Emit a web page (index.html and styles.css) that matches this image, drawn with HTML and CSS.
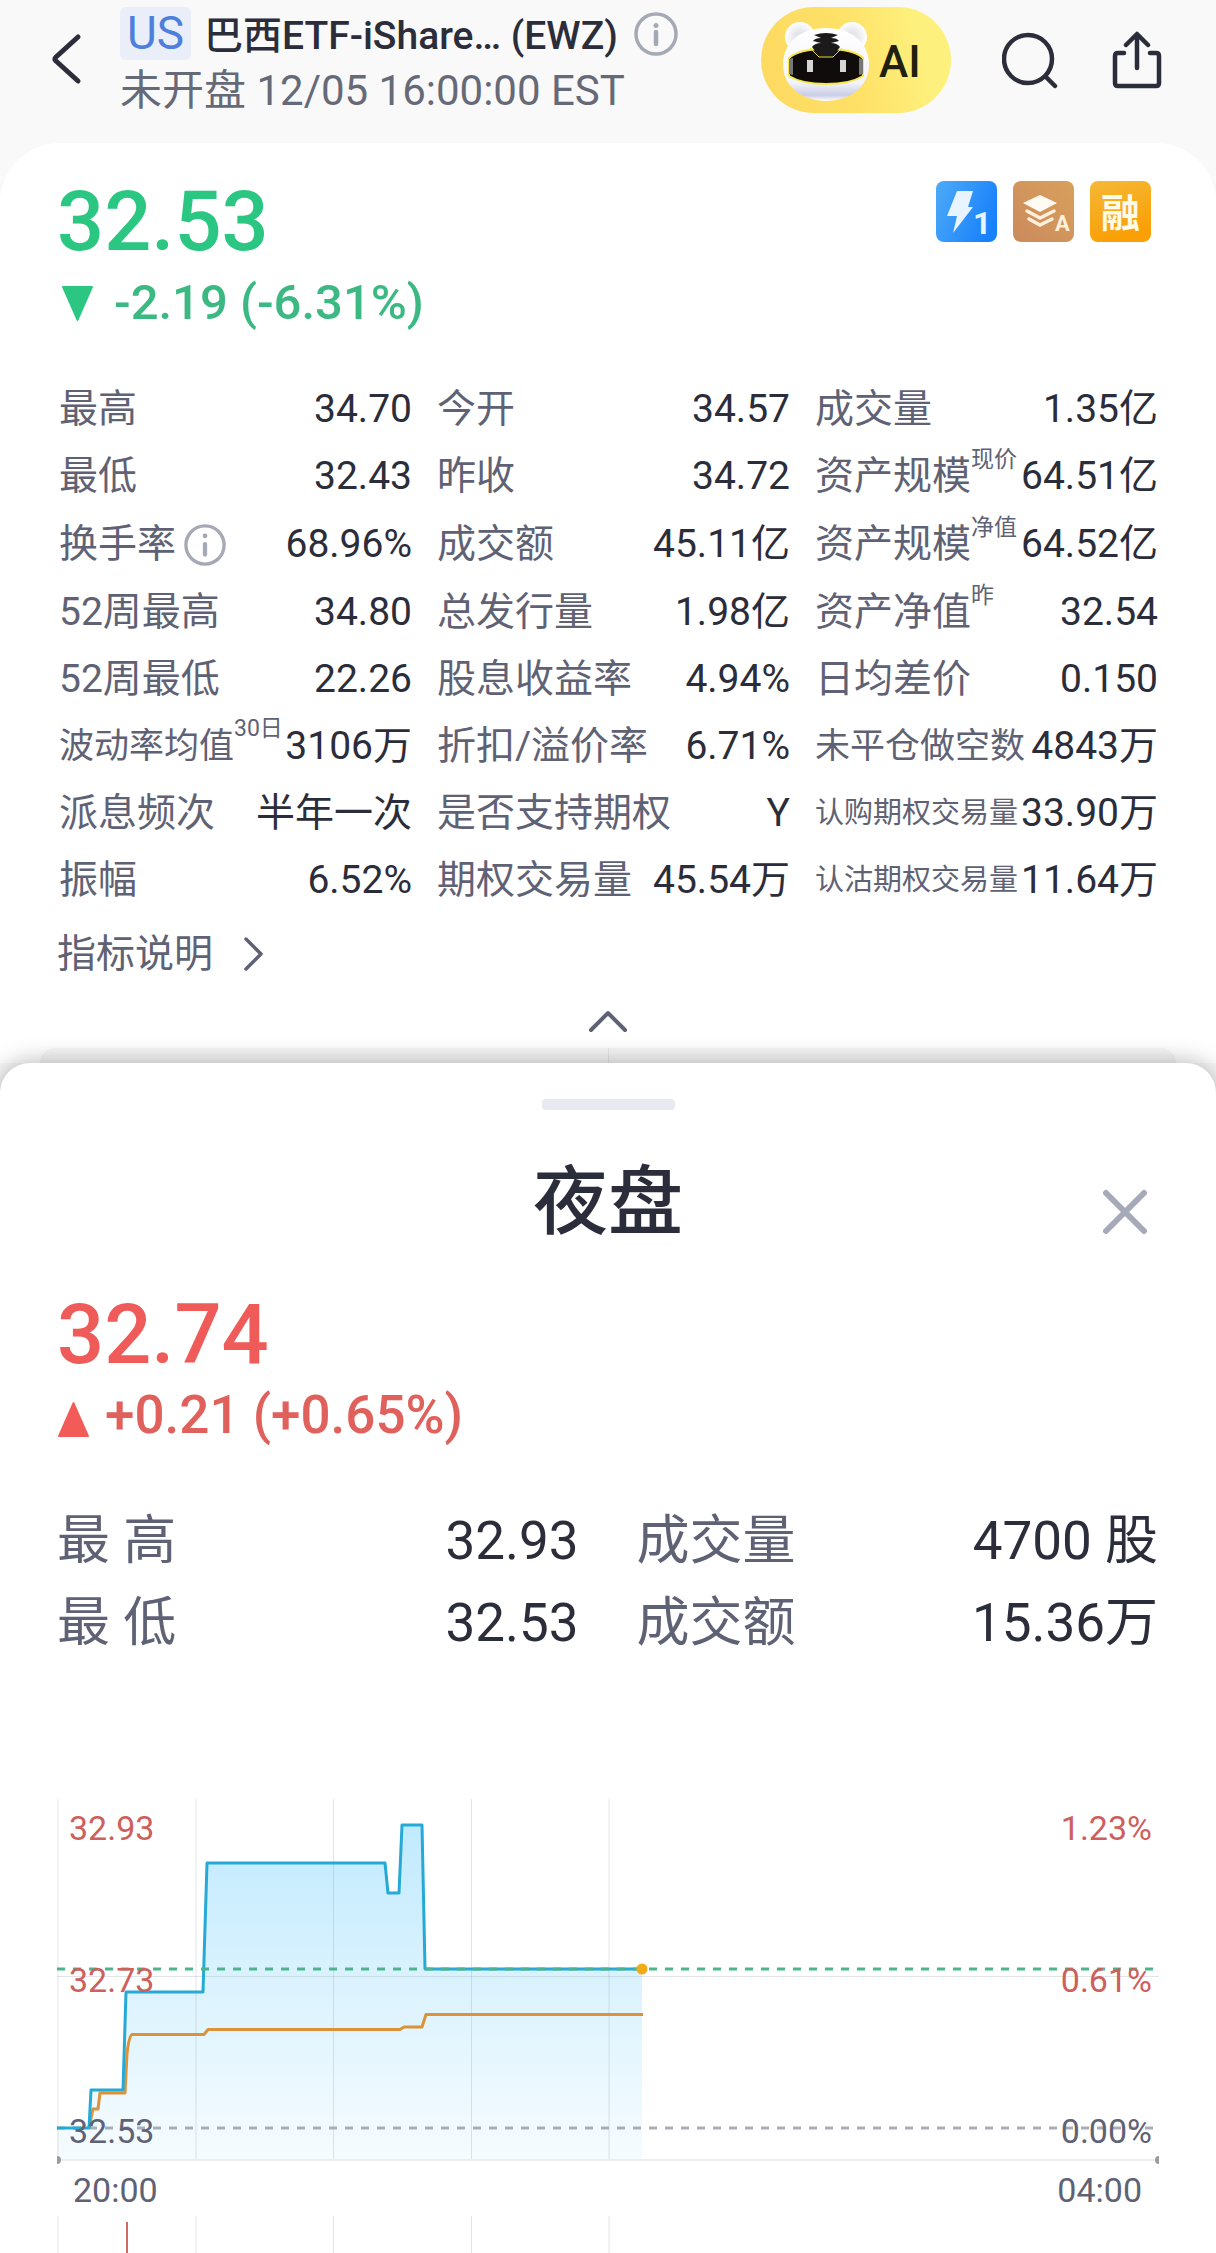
FILE: index.html
```html
<!DOCTYPE html>
<html lang="zh-CN">
<head>
<meta charset="utf-8">
<meta name="viewport" content="width=device-width, initial-scale=1">
<title>巴西ETF-iShare… (EWZ)</title>
<link rel="stylesheet" href="styles.css">
</head>
<body>
<header class="topbar">
  <button class="icon-btn back" type="button" aria-label="返回">
    <svg width="32" height="52" viewBox="0 0 32 52"><path d="M28 4 6 24q-2 2 0 4L28 48" fill="none" stroke="#2b2d3a" stroke-width="5" stroke-linecap="round" stroke-linejoin="round"/></svg>
  </button>
  <div class="heading">
    <div class="name-row">
      <span class="market">US</span>
      <h1 class="name">巴西ETF-iShare… (EWZ)</h1>
      <button class="icon-btn" type="button" aria-label="标的信息">
        <svg width="44" height="44" viewBox="0 0 44 44"><circle cx="22" cy="22" r="20" fill="none" stroke="#a5a9b5" stroke-width="3.5"/><circle cx="22" cy="13.500" r="2.500" fill="#a5a9b5"/><path d="M22 20v12" stroke="#a5a9b5" stroke-width="4.500" stroke-linecap="round"/></svg>
      </button>
    </div>
    <p class="status">未开盘 12/05 16:00:00 EST</p>
  </div>
  <button class="ai" type="button">
    <svg width="90" height="80" viewBox="0 0 90 80" aria-hidden="true">
      <defs>
        <linearGradient id="head" x1="0" y1="0" x2="0" y2="1"><stop offset="0" stop-color="#fff"/><stop offset=".75" stop-color="#f3f4fb"/><stop offset=".92" stop-color="#c9cde6"/><stop offset="1" stop-color="#fff"/></linearGradient>
        <radialGradient id="ear"><stop offset=".3" stop-color="#e4e4ea"/><stop offset="1" stop-color="#fff"/></radialGradient>
      </defs>
      <circle cx="19" cy="15" r="15" fill="url(#ear)"/><circle cx="71" cy="15" r="15" fill="url(#ear)"/>
      <path d="M45 6C20 6 2 20 2 43c0 22 20 36 43 36s43-14 43-36C88 20 70 6 45 6Z" fill="url(#head)"/>
      <path d="M45 27c-18 0-30 2-37 9v18c8 5 22 8 37 8s29-3 37-8V36c-7-7-19-9-37-9Z" fill="#100c0c" stroke="#f4e84c" stroke-width="2"/>
      <path d="m8 37 4-1v17l-4-1Zm74 0-4-1v17l4-1Z" fill="#777" />
      <path d="M33 13q12-4 24 0l-7 3q6 0 8 3l-8 2q6 0 9 4l-7 9H38l-7-9q3-4 9-4l-8-2q2-3 8-3Z" fill="#1c1a1a"/>
      <path d="m29 26 9 9h14l9-9" fill="none" stroke="#e9dc45" stroke-width="1"/>
      <path d="M26 38h6v12h-6zM59 38h6v12h-6z" fill="#d5d5d5"/>
    </svg>
    <span>AI</span>
  </button>
  <button class="icon-btn search" type="button" aria-label="搜索">
    <svg width="56" height="58" viewBox="0 0 56 58"><circle cx="26" cy="27" r="24" fill="none" stroke="#2b2d3a" stroke-width="4.500"/><path d="m44 45 9 9" stroke="#2b2d3a" stroke-width="4.500" stroke-linecap="round"/></svg>
  </button>
  <button class="icon-btn share" type="button" aria-label="分享">
    <svg width="50" height="58" viewBox="0 0 50 58"><path d="M12 22H6q-3 0-3 3v27q0 3 3 3h38q3 0 3-3V25q0-3-3-3h-6M25 37V4M14 14 25 3l11 11" fill="none" stroke="#2b2d3a" stroke-width="4.500" stroke-linecap="round" stroke-linejoin="round"/></svg>
  </button>
</header>

<main>
  <section class="quote">
    <div class="quote-top">
      <div>
        <p class="price down">32.53</p>
        <p class="change down-soft">
          <svg width="31" height="35" viewBox="0 0 31 35" aria-hidden="true"><path d="M1 0h29q1 0 1 1L16.500 34q-1 2-2 0L0 1q0-1 1-1Z" fill="#2bc681"/></svg>
          <span>-2.19 (-6.31%)</span>
        </p>
      </div>
      <div class="badges">
        <svg class="badge" viewBox="0 0 61 61" role="img" aria-label="闪电行情 1">
          <defs><linearGradient id="b1" x1="0" y1=".2" x2="1" y2=".6"><stop offset="0" stop-color="#4aa8f8"/><stop offset="1" stop-color="#1780fb"/></linearGradient></defs>
          <rect width="61" height="61" rx="8" fill="url(#b1)"/>
          <path d="M21 10h16l-5 16h5L17 52l4-17H11Z" fill="#e8f4ff"/>
          <text x="37" y="53" class="badge-num">1</text>
        </svg>
        <svg class="badge" viewBox="0 0 61 61" role="img" aria-label="深度行情 A">
          <defs><linearGradient id="b2" x1="0" y1="1" x2="1" y2="0"><stop offset="0" stop-color="#cb8a5c"/><stop offset="1" stop-color="#d9a05c"/></linearGradient></defs>
          <rect width="61" height="61" rx="8" fill="url(#b2)"/>
          <path d="M10 22 27 14l17 8-17 9Z" fill="#fffaf2"/>
          <path d="m14 30 13 7 14-7M16 38l11 6 12-6" fill="none" stroke="#fff0dc" stroke-width="3.500" stroke-linecap="round"/>
          <text x="42" y="50" class="badge-letter">A</text>
        </svg>
        <svg class="badge" viewBox="0 0 61 61" role="img" aria-label="融">
          <defs><linearGradient id="b3" x1="0" y1="0" x2=".3" y2="1"><stop offset="0" stop-color="#f5b836"/><stop offset="1" stop-color="#fa9f05"/></linearGradient></defs>
          <rect width="61" height="61" rx="8" fill="url(#b3)"/>
          <text x="11" y="46" class="badge-cjk">融</text>
        </svg>
      </div>
    </div>

    <dl class="stats">
      <div><dt>最高</dt><dd>34.70</dd></div>
      <div><dt>今开</dt><dd>34.57</dd></div>
      <div><dt>成交量</dt><dd>1.35亿</dd></div>
      <div><dt>最低</dt><dd>32.43</dd></div>
      <div><dt>昨收</dt><dd>34.72</dd></div>
      <div><dt>资产规模<sup>现价</sup></dt><dd>64.51亿</dd></div>
      <div><dt class="with-icon">换手率<button class="icon-btn" type="button" aria-label="换手率说明"><svg width="42" height="42" viewBox="0 0 44 44"><circle cx="22" cy="22" r="20" fill="none" stroke="#a5a9b5" stroke-width="3.500"/><circle cx="22" cy="12.500" r="2.500" fill="#a5a9b5"/><path d="M22 21v11" stroke="#a5a9b5" stroke-width="4.500" stroke-linecap="round"/></svg></button></dt><dd>68.96%</dd></div>
      <div><dt>成交额</dt><dd>45.11亿</dd></div>
      <div><dt>资产规模<sup>净值</sup></dt><dd>64.52亿</dd></div>
      <div><dt>52周最高</dt><dd>34.80</dd></div>
      <div><dt>总发行量</dt><dd>1.98亿</dd></div>
      <div><dt>资产净值<sup>昨</sup></dt><dd>32.54</dd></div>
      <div><dt>52周最低</dt><dd>22.26</dd></div>
      <div><dt>股息收益率</dt><dd>4.94%</dd></div>
      <div><dt>日均差价</dt><dd>0.150</dd></div>
      <div><dt class="mid">波动率均值<sup>30日</sup></dt><dd>3106万</dd></div>
      <div><dt>折扣/溢价率</dt><dd>6.71%</dd></div>
      <div><dt class="mid">未平仓做空数</dt><dd>4843万</dd></div>
      <div><dt>派息频次</dt><dd>半年一次</dd></div>
      <div><dt>是否支持期权</dt><dd>Y</dd></div>
      <div><dt class="small">认购期权交易量</dt><dd>33.90万</dd></div>
      <div><dt>振幅</dt><dd>6.52%</dd></div>
      <div><dt>期权交易量</dt><dd>45.54万</dd></div>
      <div><dt class="small">认沽期权交易量</dt><dd>11.64万</dd></div>
    </dl>

    <a class="explain" href="#explain">指标说明
      <svg width="20" height="34" viewBox="0 0 20 34" aria-hidden="true"><path d="m2 2 15 15L2 32" fill="none" stroke="#5f6275" stroke-width="3.500" stroke-linecap="round" stroke-linejoin="round"/></svg>
    </a>
    <button class="icon-btn collapse" type="button" aria-label="收起">
      <svg width="40" height="24" viewBox="0 0 40 24"><path d="M3 20 20 3l17 17" fill="none" stroke="#5f6275" stroke-width="4" stroke-linecap="round" stroke-linejoin="round"/></svg>
    </button>
    <div class="behind"></div>
  </section>

  <section class="sheet">
    <div class="handle"></div>
    <div class="sheet-head">
      <h2>夜盘</h2>
      <button class="icon-btn close" type="button" aria-label="关闭">
        <svg width="46" height="46" viewBox="0 0 46 46"><path d="m4 4 38 38M42 4 4 42" stroke="#a5a9b8" stroke-width="6" stroke-linecap="round"/></svg>
      </button>
    </div>
    <p class="price up">32.74</p>
    <p class="change large up-soft">
      <svg width="31" height="35" viewBox="0 0 31 35" aria-hidden="true"><path d="M1 35h29q1 0 1-1L16.500 1q-1-2-2 0L0 34q0 1 1 1Z" fill="#f25b57"/></svg>
      <span>+0.21 (+0.65%)</span>
    </p>
    <dl class="session">
      <div><dt>最 高</dt><dd>32.93</dd></div>
      <div><dt>成交量</dt><dd>4700 股</dd></div>
      <div><dt>最 低</dt><dd>32.53</dd></div>
      <div><dt>成交额</dt><dd>15.36万</dd></div>
    </dl>

    <div class="chart">
      <svg viewBox="0 0 1102 366" role="img" aria-label="夜盘分时图">
        <defs><linearGradient id="area" x1="0" y1="0" x2="0" y2="1"><stop offset="0" stop-color="#c1eaff"/><stop offset=".5" stop-color="#dcf3fe"/><stop offset="1" stop-color="#f6fcff"/></linearGradient></defs>
        <path d="M0 329H32L34 291H66L69 193H146L150 64H328L331 94H342L345 26H365L368 170H585V361H0Z" fill="url(#area)"/>
        <path d="M1 0V361M139 0V361M276.500 0V361M414.500 0V361M552 0V361M0 177.500H1102" stroke="#8c96a0" stroke-opacity=".25" fill="none"/>
        <path d="M0 361H1102" stroke="#eceef0" stroke-width="2"/>
        <path d="M0 329H1098" stroke="#a9adb8" stroke-width="3" stroke-dasharray="8 8"/>
        <path d="M32 329 36 310H41L43 294H68L70 255Q72 237 75 235.500H147L151 230.500H343L347 228H365L369 215.500H586" fill="none" stroke="#dc9238" stroke-width="3" stroke-linejoin="round"/>
        <path d="M0 329H32L34 291H66L69 193H146L150 64H328L331 94H342L345 26H365L368 170H585" fill="none" stroke="#25a9d6" stroke-width="3" stroke-linejoin="round"/>
        <path d="M0 170H1098" stroke="#4db58b" stroke-width="3" stroke-dasharray="8 8"/>
        <circle cx="585" cy="170" r="5.500" fill="#f0ab16"/>
        <circle cx="0" cy="361" r="4" fill="#9b9b9f"/><circle cx="1102" cy="361" r="4" fill="#9b9b9f"/>
      </svg>
      <div class="scale scale-left"><span class="pos">32.93</span><span class="pos">32.73</span><span>32.53</span></div>
      <div class="scale scale-right"><span class="pos">1.23%</span><span class="pos">0.61%</span><span>0.00%</span></div>
    </div>
    <div class="times"><span>20:00</span><span>04:00</span></div>
    <svg class="volume" viewBox="0 0 1102 37" role="img" aria-label="成交量图">
      <path d="M1 0V37M139 0V37M276.500 0V37M414.500 0V37M552 0V37" stroke="#e2e4e6" fill="none"/>
      <path d="M70 6V37" stroke="#cd6a66" stroke-width="2"/>
    </svg>
  </section>
</main>
</body>
</html>
```
FILE: styles.css
```css
* { box-sizing: border-box; }

body {
  margin: 0;
  background: #f9f9f9;
  color: #2b2d3a;
  font-family: Roboto, "Noto Sans CJK SC", sans-serif;
}

h1, h2, p, dl, dd { margin: 0; }

svg { display: block; flex: none; }

.icon-btn {
  display: flex;
  padding: 0;
  border: 0;
  background: none;
}

/* Top bar */
.topbar {
  display: flex;
  align-items: flex-start;
  height: 143px;
  padding: 7px 54px 0 50px;
}
.back { margin-top: 26px; }
.heading { margin-left: 38px; }
.name-row {
  display: flex;
  align-items: center;
  height: 53px;
}
.market {
  width: 71px;
  margin-right: 13px;
  border-radius: 6px;
  background: #e9eef9;
  color: #4f7fdc;
  font-size: 46px;
  line-height: 53px;
  text-align: center;
}
.name {
  margin-right: 16px;
  padding-top: 6px;
  font-size: 39px;
  font-weight: 500;
  line-height: 53px;
  white-space: nowrap;
}
.status {
  color: #666978;
  font-size: 42px;
  line-height: 62px;
  white-space: nowrap;
}
.ai {
  display: flex;
  align-items: center;
  gap: 8px;
  height: 106px;
  width: 190px;
  margin-left: auto;
  padding: 4px 0 0 20px;
  border: 0;
  border-radius: 53px;
  background: linear-gradient(75deg, #fdd960, #fee066 45%, #fef07c 80%);
  color: #20200f;
  font: 500 44px/52px Roboto, sans-serif;
}
.search { margin: 25px 0 0 51px; }
.share { margin: 24px 0 0 54px; }

/* Quote card */
.quote {
  padding-top: 31px;
  border-radius: 60px 60px 0 0;
  background: #fff;
}
.quote-top {
  display: flex;
  justify-content: space-between;
  padding: 0 65px 0 57px;
}
.price {
  font-size: 83px;
  font-weight: 500;
  line-height: 96px;
}
.change {
  display: flex;
  align-items: center;
  gap: 21px;
  padding-left: 5px;
  font-size: 49px;
  font-weight: 500;
  line-height: 66px;
}
.change.large {
  gap: 16px;
  padding-left: 1px;
  font-size: 53px;
  line-height: 64px;
}
.change.large svg { margin-top: 8px; }
.down { color: #2bc681; }
.down-soft { color: #3cb983; }
.up { color: #ee5b58; }
.up-soft { color: #e0605c; }
.badges {
  display: flex;
  gap: 16px;
  padding-top: 7px;
}
.badge { width: 61px; height: 61px; }
.badge-num { fill: #e8f4ff; font-size: 32px; font-weight: 700; }
.badge-letter { fill: #fff0dc; font-size: 22px; font-weight: 700; }
.badge-cjk { fill: #fffbe8; font-size: 39px; font-weight: 700; }

.stats {
  display: grid;
  grid-template-columns: 353fr 353fr 343fr;
  grid-template-rows: 67px 67px 69px;
  grid-auto-rows: 67px;
  column-gap: 25px;
  margin-top: 40px;
  padding: 0 58px 0 59px;
  font-size: 39px;
}
.stats > div,
.session > div {
  display: flex;
  align-items: center;
  justify-content: space-between;
  white-space: nowrap;
}
dt { color: #5f6275; }
.stats dt, .stats dd { line-height: 67px; }
.with-icon {
  display: flex;
  align-items: center;
  gap: 8px;
}
.mid { font-size: 35px; }
.small { font-size: 29px; }
sup {
  font-size: 23px;
  line-height: 0;
  vertical-align: 22px;
}
.explain {
  display: flex;
  align-items: center;
  gap: 31px;
  width: fit-content;
  margin-left: 57px;
  color: #5f6275;
  font-size: 39px;
  line-height: 80px;
  text-decoration: none;
}
.collapse {
  margin: 16px auto 14px;
}
.behind {
  width: calc(100% - 80px);
  height: 15px;
  margin: 0 auto;
  border-radius: 30px 30px 0 0;
  background: linear-gradient(#e6e6e6, #e6e6e6) center / 1px 100% no-repeat #f6f6f6;
}

/* Night session sheet */
.sheet {
  position: relative;
  padding: 36px 57px 0;
  border-radius: 30px 30px 0 0;
  background: #fff;
  box-shadow: 0 0 24px rgba(0, 0, 0, .32);
}
.handle {
  width: 133px;
  height: 11px;
  margin: 0 auto;
  border-radius: 4px;
  background: #e9eaf1;
}
.sheet-head {
  display: grid;
  grid-template-columns: 1fr auto 1fr;
  align-items: center;
  margin-top: 38px;
}
h2 {
  grid-column: 2;
  font-size: 75px;
  font-weight: 500;
  line-height: 108px;
}
.close {
  justify-self: end;
  margin: 20px 11px 0 0;
}
.sheet .price { margin-top: 31px; }

.session {
  display: grid;
  grid-template-columns: 1fr 1fr;
  grid-auto-rows: 82px;
  column-gap: 58px;
  margin-top: 53px;
  padding-right: 1px;
  font-size: 53px;
  line-height: 82px;
}

.chart {
  position: relative;
  margin-top: 135px;
}
.chart svg { width: 100%; overflow: hidden; }
.scale {
  position: absolute;
  top: 9px;
  bottom: 14px;
  display: flex;
  flex-direction: column;
  justify-content: space-between;
  color: #5f6275;
  font-size: 34px;
  line-height: 40px;
}
.scale-left { left: 12px; }
.scale-right { right: 7px; text-align: right; }
.scale .pos { color: #cd5f5c; }
.times {
  display: flex;
  justify-content: space-between;
  padding: 5px 17px 0 16px;
  color: #5f6275;
  font-size: 34px;
  line-height: 40px;
}
.volume { width: 100%; margin-top: 6px; }
```
